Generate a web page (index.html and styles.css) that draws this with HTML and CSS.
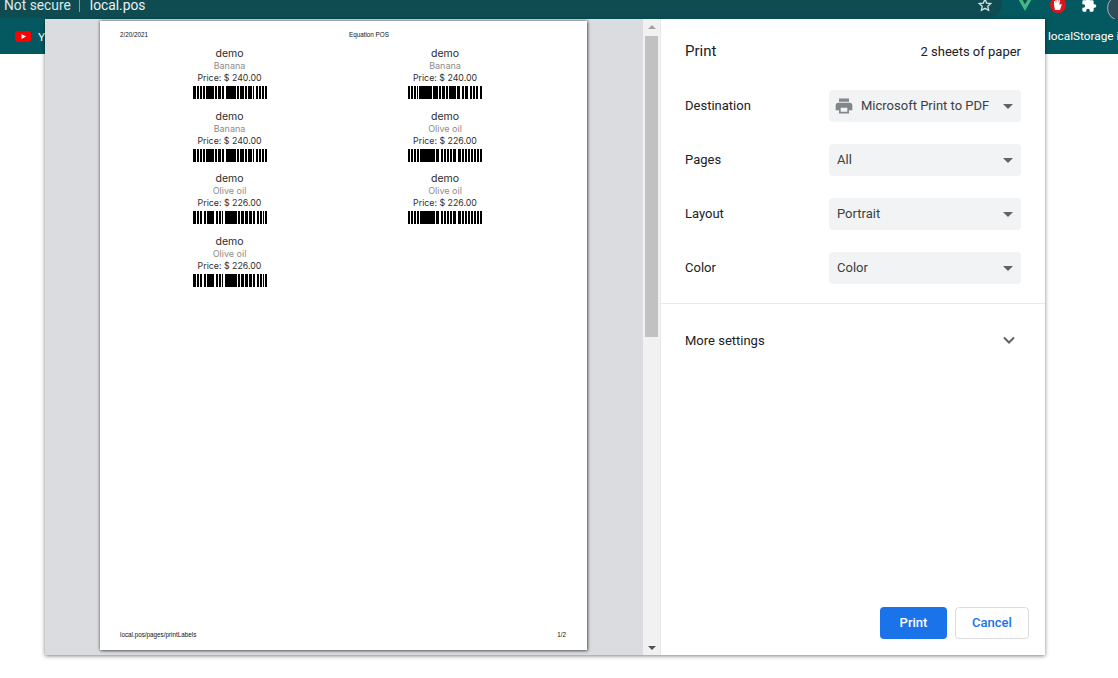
FILE: index.html
```html
<!DOCTYPE html>
<html lang="en">
<head>
  <meta charset="UTF-8">
  <title>Print</title>
  <link rel="stylesheet" href="styles.css">
</head>
<body>
  <svg class="defs" width="0" height="0">
    <symbol id="code-banana-a" viewBox="0 0 74 13">
      <path d="M0 0h3v13H0zM4 0h2v13H4zM7 0h2v13H7zM10 0h2v13h-2zM13 0h8v13h-8zM22 0h2v13h-2zM25 0h3v13h-3zM29 0h2v13h-2zM33 0h10v13H33zM44 0h2v13h-2zM47 0h4v13h-4zM52 0h2v13h-2zM55 0h4v13h-4zM60 0h1v13h-1zM63 0h2v13h-2zM66 0h2v13h-2zM69 0h2v13h-2zM72 0h2v13h-2z"/>
    </symbol>
    <symbol id="code-banana-b" viewBox="0 0 74 13">
      <path d="M0 0h2v13H0zM3 0h2v13H3zM6 0h2v13H6zM9 0h1v13H9zM11 0h13v13H11zM25 0h5v13h-5zM31 0h2v13h-2zM34 0h3v13h-3zM38 0h2v13h-2zM41 0h7v13h-7zM49 0h3v13h-3zM54 0h2v13h-2zM57 0h3v13h-3zM62 0h2v13h-2zM65 0h2v13h-2zM68 0h2v13h-2zM72 0h2v13h-2z"/>
    </symbol>
    <symbol id="code-olive-a" viewBox="0 0 74 13">
      <path d="M0 0h3v13H0zM4 0h2v13H4zM7 0h2v13H7zM11 0h2v13h-2zM14 0h7v13h-7zM23 0h2v13h-2zM26 0h2v13h-2zM29 0h1v13h-1zM32 0h12v13H32zM45 0h2v13h-2zM48 0h3v13h-3zM52 0h3v13h-3zM56 0h3v13h-3zM60 0h2v13h-2zM64 0h2v13h-2zM67 0h2v13h-2zM70 0h1v13h-1zM72 0h2v13h-2z"/>
    </symbol>
    <symbol id="code-olive-b" viewBox="0 0 74 13">
      <path d="M0 0h2v13H0zM3 0h2v13H3zM6 0h2v13H6zM9 0h2v13H9zM12 0h15v13H12zM28 0h3v13h-3zM33 0h2v13h-2zM36 0h2v13h-2zM39 0h2v13h-2zM42 0h2v13h-2zM45 0h3v13h-3zM50 0h3v13h-3zM54 0h2v13h-2zM57 0h2v13h-2zM60 0h2v13h-2zM63 0h2v13h-2zM66 0h2v13h-2zM69 0h2v13h-2zM72 0h2v13h-2z"/>
    </symbol>
  </svg>

  <header class="browser-bar">
    <div class="omnibox">
      <span class="secure">Not secure</span>
      <span class="divider"></span>
      <span class="host">local.pos</span>
      <svg class="icon-star" width="16" height="16" viewBox="0 0 24 24" fill="none" stroke="#d5e0e1" stroke-width="2"><path d="M12 3.5l2.6 5.6 6.1.7-4.5 4.2 1.2 6L12 17l-5.4 3 1.2-6-4.5-4.2 6.1-.7z"/></svg>
    </div>
    <svg class="icon-vue" width="16" height="14" viewBox="0 0 16 14"><path d="M0 0h4l4 7 4-7h4L8 14z" fill="#41b883"/><path d="M4 0h2.5L8 3l1.5-3H12L8 7z" fill="#0f4c52"/></svg>
    <svg class="icon-hand" width="18" height="18" viewBox="0 0 18 18"><circle cx="9" cy="9" r="8" fill="#e0141c"/><path d="M6 14l-1-5V5h1v3l.5-5h1l.3 4 .5-5h1v5l.7-4h1l-.5 6 1.5-1 .8.6L11 14z" fill="#fff"/></svg>
    <svg class="icon-puzzle" width="16" height="16" viewBox="0 0 24 24" fill="#fff"><path d="M20.5 11H19V7a2 2 0 0 0-2-2h-4V3.5a2.5 2.5 0 0 0-5 0V5H4a2 2 0 0 0-2 2v3.8h1.5a2.7 2.7 0 0 1 0 5.4H2V20a2 2 0 0 0 2 2h3.8v-1.5a2.7 2.7 0 0 1 5.4 0V22H17a2 2 0 0 0 2-2v-4h1.5a2.5 2.5 0 0 0 0-5z"/></svg>
    <span class="avatar"></span>
  </header>

  <nav class="bookmarks">
    <svg class="icon-yt" width="16" height="11" viewBox="0 0 16 11"><rect width="16" height="11" rx="3" fill="#f00"/><path d="M6.5 3v5L11 5.5z" fill="#fff"/></svg>
    <span class="bookmark-first">Y</span>
    <span class="bookmark-last">localStorage i</span>
  </nav>

  <div class="dialog">
    <section class="preview">
      <div class="preview-pane">
        <div class="sheet">
          <div class="sheet-head">
            <span>2/20/2021</span>
            <span class="sheet-title">Equation POS</span>
          </div>
          <div class="labels">
            <div class="label">
              <div class="label-user">demo</div>
              <div class="label-name">Banana</div>
              <div class="label-price">Price: $ 240.00</div>
              <svg class="barcode"><use href="#code-banana-a"/></svg>
            </div>
            <div class="label">
              <div class="label-user">demo</div>
              <div class="label-name">Banana</div>
              <div class="label-price">Price: $ 240.00</div>
              <svg class="barcode"><use href="#code-banana-b"/></svg>
            </div>
            <div class="label">
              <div class="label-user">demo</div>
              <div class="label-name">Banana</div>
              <div class="label-price">Price: $ 240.00</div>
              <svg class="barcode"><use href="#code-banana-a"/></svg>
            </div>
            <div class="label">
              <div class="label-user">demo</div>
              <div class="label-name">Olive oil</div>
              <div class="label-price">Price: $ 226.00</div>
              <svg class="barcode"><use href="#code-olive-b"/></svg>
            </div>
            <div class="label">
              <div class="label-user">demo</div>
              <div class="label-name">Olive oil</div>
              <div class="label-price">Price: $ 226.00</div>
              <svg class="barcode"><use href="#code-olive-a"/></svg>
            </div>
            <div class="label">
              <div class="label-user">demo</div>
              <div class="label-name">Olive oil</div>
              <div class="label-price">Price: $ 226.00</div>
              <svg class="barcode"><use href="#code-olive-b"/></svg>
            </div>
            <div class="label">
              <div class="label-user">demo</div>
              <div class="label-name">Olive oil</div>
              <div class="label-price">Price: $ 226.00</div>
              <svg class="barcode"><use href="#code-olive-a"/></svg>
            </div>
          </div>
          <div class="sheet-foot">
            <span>local.pos/pages/printLabels</span>
            <span>1/2</span>
          </div>
        </div>
      </div>
      <div class="scrollbar">
        <span class="arrow-up"></span>
        <span class="thumb"></span>
        <span class="arrow-down"></span>
      </div>
    </section>

    <aside class="panel">
      <div class="panel-head">
        <h1>Print</h1>
        <span class="sheets">2 sheets of paper</span>
      </div>
      <div class="settings">
        <div class="row">
          <label>Destination</label>
          <div class="select">
            <svg class="icon-printer" width="20" height="20" viewBox="0 0 24 24" fill="#80868b"><path d="M19 8H5c-1.7 0-3 1.3-3 3v6h4v4h12v-4h4v-6c0-1.7-1.3-3-3-3zm-3 11H8v-5h8v5zM18 3H6v4h12V3z"/></svg>
            <span class="select-text">Microsoft Print to PDF</span>
            <span class="caret"></span>
          </div>
        </div>
        <div class="row">
          <label>Pages</label>
          <div class="select"><span class="select-text">All</span><span class="caret"></span></div>
        </div>
        <div class="row">
          <label>Layout</label>
          <div class="select"><span class="select-text">Portrait</span><span class="caret"></span></div>
        </div>
        <div class="row">
          <label>Color</label>
          <div class="select"><span class="select-text">Color</span><span class="caret"></span></div>
        </div>
      </div>
      <div class="more">
        <span>More settings</span>
        <svg width="12" height="8" viewBox="0 0 12 8" fill="none" stroke="#5f6368" stroke-width="2"><path d="M1 1.5l5 5 5-5"/></svg>
      </div>
      <div class="actions">
        <button class="btn btn-print" type="button">Print</button>
        <button class="btn btn-cancel" type="button">Cancel</button>
      </div>
    </aside>
  </div>
</body>
</html>
```

FILE: styles.css
```css
html, body {
  height: 678px;
}

body {
  margin: 0;
  overflow: hidden;
  background-color: #fff;
  font-family: Roboto, Arial, sans-serif;
}

.defs {
  display: block;
  height: 0;
}

.browser-bar {
  display: flex;
  align-items: flex-start;
  height: 19px;
  background-color: #03595f;
  overflow: hidden;
}

.browser-bar svg {
  flex: none;
}

.omnibox {
  display: flex;
  align-items: flex-start;
  box-sizing: border-box;
  flex: none;
  width: 1002px;
  height: 18px;
  padding: 0 9px 0 4px;
  border-bottom-right-radius: 14px;
  background-color: #0f4c52;
  color: #dfe8e9;
  font-size: 13.8px;
  line-height: 11px;
}

.secure {
  white-space: nowrap;
}

.host {
  color: #eef3f3;
}

.divider {
  width: 1px;
  height: 13px;
  margin: -1px 10px 0 8px;
  background-color: #7fa0a3;
}

.icon-star {
  margin: -3px 0 0 auto;
}

.icon-vue {
  margin: -3px 0 0 15px;
}

.icon-hand {
  margin: -4px 0 0 16px;
}

.icon-puzzle {
  margin: -3px 0 0 14px;
}

.avatar {
  flex: none;
  width: 24px;
  height: 24px;
  margin: -5px 0 0 10px;
  border: 1px solid #9fb6b8;
  border-radius: 50%;
  background-color: #2f4b5a;
}

.bookmarks {
  display: flex;
  align-items: center;
  height: 35px;
  padding-left: 15px;
  background-color: #03595f;
  color: #fff;
  font-size: 11.8px;
  overflow: hidden;
}

.bookmark-first {
  margin-left: 7px;
}

.bookmark-last {
  flex: none;
  width: 70px;
  margin: 0 0 2px auto;
  white-space: nowrap;
}

.dialog {
  position: absolute;
  top: 19px;
  left: 45px;
  display: flex;
  width: 1000px;
  height: 636px;
  background-color: #fff;
  box-shadow: 0 1px 4px rgba(0, 0, 0, 0.5);
}

.preview {
  display: flex;
  width: 615px;
  background-color: #dadce0;
}

.preview-pane {
  flex: 1;
  padding: 2px 0 0 55px;
}

.sheet {
  display: flex;
  flex-direction: column;
  box-sizing: border-box;
  width: 487px;
  height: 629px;
  padding: 10px 21px 11px 20px;
  background-color: #fff;
  box-shadow: 0 0 3px rgba(0, 0, 0, 0.55), 1px 1px 3px rgba(0, 0, 0, 0.4);
  color: #111;
}

.sheet-head, .sheet-foot {
  display: flex;
  font-family: "Liberation Sans", Arial, sans-serif;
  font-size: 6.3px;
  line-height: 8px;
}

.sheet-title {
  margin-left: 201px;
}

.sheet-foot {
  justify-content: space-between;
  margin-top: auto;
}

.labels {
  display: grid;
  grid-template-columns: 219px 212px;
  grid-auto-rows: 62.7px;
  justify-content: start;
  margin-top: 9px;
  flex: 1;
}

.label {
  display: flex;
  flex-direction: column;
  align-items: center;
  font-family: Inter, Arial, sans-serif;
}

.label-user {
  font-size: 10.5px;
  line-height: 12px;
  color: #2b2b2b;
}

.label-name {
  font-size: 9px;
  line-height: 11px;
  color: #8c8c8c;
}

.label-price {
  margin-top: 1px;
  font-size: 8.8px;
  line-height: 12px;
  color: #2f2f2f;
}

.barcode {
  display: block;
  width: 74px;
  height: 13px;
  margin-top: 2px;
  fill: #000;
}

.scrollbar {
  display: flex;
  flex-direction: column;
  align-items: center;
  width: 17px;
  background-color: #f1f1f1;
}

.arrow-up, .arrow-down {
  width: 0;
  height: 0;
  border-left: 4px solid transparent;
  border-right: 4px solid transparent;
}

.arrow-up {
  margin-top: 6px;
  border-bottom: 4px solid #a3a3a3;
}

.arrow-down {
  margin-top: auto;
  margin-bottom: 5px;
  border-top: 4px solid #505050;
}

.thumb {
  width: 13px;
  height: 301px;
  margin-top: 7px;
  background-color: #c1c1c1;
}

.panel {
  display: flex;
  flex-direction: column;
  flex: 1;
  border-left: 1px solid #e8e8e8;
  color: #202124;
  font-size: 13px;
}

.panel-head {
  display: flex;
  justify-content: space-between;
  align-items: center;
  padding: 22px 24px 0;
  height: 20px;
}

.panel-head h1 {
  margin: 0;
  font-size: 15px;
  font-weight: 400;
}

.settings {
  display: flex;
  flex-direction: column;
  gap: 22px;
  padding: 29px 24px 19px;
  border-bottom: 1px solid #e8eaed;
}

.row {
  display: flex;
  justify-content: space-between;
  align-items: center;
  height: 32px;
}

.row label {
  margin-bottom: 2px;
}

.select {
  display: flex;
  align-items: center;
  box-sizing: border-box;
  width: 192px;
  height: 32px;
  padding: 0 8px;
  border-radius: 4px;
  background-color: #f1f3f4;
  color: #3c4043;
}

.select-text {
  margin-bottom: 2px;
}

.icon-printer {
  margin: 0 7px 0 -3px;
}

.caret {
  width: 0;
  height: 0;
  margin-left: auto;
  border-left: 5px solid transparent;
  border-right: 5px solid transparent;
  border-top: 5px solid #5f6368;
}

.more {
  display: flex;
  justify-content: space-between;
  align-items: center;
  height: 73px;
  padding: 0 30px 0 24px;
}

.more svg {
  margin-bottom: 2px;
}

.actions {
  display: flex;
  justify-content: flex-end;
  gap: 8px;
  margin-top: auto;
  padding: 0 16px 16px 0;
}

.btn {
  box-sizing: border-box;
  height: 32px;
  padding: 0 0 2px;
  border-radius: 4px;
  font-family: Roboto, Arial, sans-serif;
  font-size: 13px;
  font-weight: 500;
  cursor: pointer;
}

.btn-print {
  width: 67px;
  border: none;
  background-color: #1a73e8;
  color: #fff;
}

.btn-cancel {
  width: 74px;
  border: 1px solid #dadce0;
  background-color: #fff;
  color: #1a73e8;
}
```
